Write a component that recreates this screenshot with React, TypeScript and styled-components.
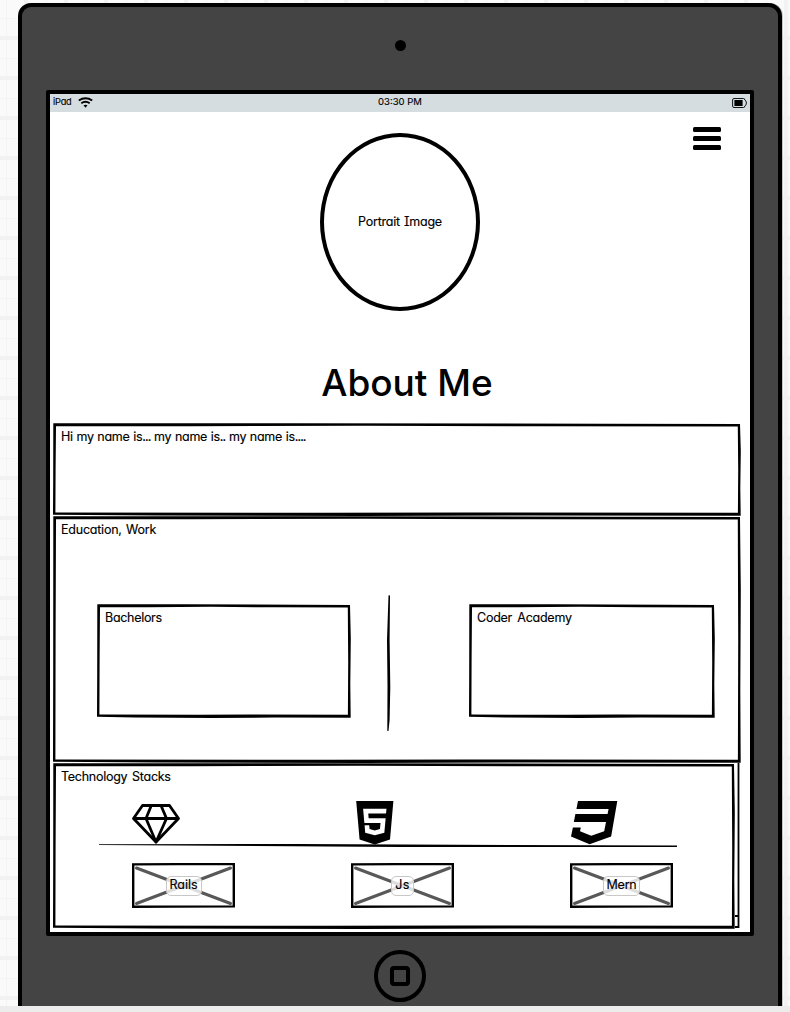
import React from "react";
import styled, { createGlobalStyle } from "styled-components";
import { FaHtml5, FaCss3 } from "react-icons/fa";

const GlobalStyle = createGlobalStyle`
  *, *::after { box-sizing: border-box; }
  html, body { margin: 0; padding: 0; }
  body {
    width: 790px;
    height: 1012px;
    overflow: hidden;
    color: #000;
    font-family: Inter, "Liberation Sans", sans-serif;
    font-feature-settings: "cv11" 1, "cv08" 1;
  }
  svg { display: block; }
`;

const Canvas = styled.div`
  height: 1012px;
  padding: 3px 8px 0 18px;
  border-bottom: 6px solid #ececec;
  overflow: hidden;
  background-color: #fafafa;
  background-image:
    linear-gradient(90deg, #f2f2f2 4px, transparent 4px),
    linear-gradient(#f2f2f2 4px, transparent 4px),
    linear-gradient(90deg, #f4f4f4 1px, transparent 1px),
    linear-gradient(#f4f4f4 1px, transparent 1px);
  background-size: 40px 40px;
  background-position: 24px 0, 0 36px, 6px 0, 0 18px;
`;

const Device = styled.div`
  display: flex;
  flex-direction: column;
  align-items: center;
  width: 764px;
  height: 1003px;
  background: #444;
  border: 4px solid #000;
  border-bottom: 0;
  border-radius: 13px 13px 0 0;
  box-shadow: 1px 0 0 #c4c4c4;
`;

const Camera = styled.div`
  width: 11px;
  height: 11px;
  margin: 32.5px 0 39.5px;
  border-radius: 50%;
  background: #000;
`;

const Screen = styled.main`
  display: flex;
  flex-direction: column;
  width: 708px;
  height: 846px;
  flex: none;
  background: #fff;
  border: 4px solid #000;
  border-radius: 2px;
`;

const HomeButton = styled.div`
  display: grid;
  place-items: center;
  width: 52px;
  height: 52px;
  flex: none;
  margin-top: 14px;
  border: 4px solid #000;
  border-radius: 50%;
  &::after {
    content: "";
    width: 20px;
    height: 20px;
    border: 4px solid #000;
    border-radius: 4px;
  }
`;

const StatusBar = styled.div`
  display: grid;
  grid-template-columns: 1fr auto 1fr;
  align-items: center;
  height: 18px;
  flex: none;
  padding: 0 3px 2px;
  background: #d6dde0;
  line-height: 15px;
`;

const StatusLeft = styled.div`
  display: flex;
  align-items: center;
  gap: 6px;
`;

const StatusRight = styled.div`
  display: flex;
  justify-content: flex-end;
`;

const Text = styled.span<{ $size?: number; $track?: number; $gap?: number }>`
  font-size: ${(p) => p.$size ?? 12.5}px;
  letter-spacing: ${(p) => p.$track ?? 0}px;
  word-spacing: ${(p) => p.$gap ?? 0}px;
  white-space: nowrap;
  -webkit-text-stroke: 0.15px #000;
`;

const StatusText = styled(Text)`
  padding-bottom: 2px;
`;

const Dots = styled.span`
  letter-spacing: -0.9px;
`;

const Hero = styled.header`
  display: grid;
  grid-template-columns: 1fr 160px 1fr;
  height: 199px;
  flex: none;
  padding: 14px 29px 0;
`;

const Portrait = styled.div`
  display: grid;
  grid-column: 2;
  place-items: center;
  width: 160px;
  height: 178px;
  margin-top: 7px;
  padding-bottom: 2px;
  border: 4px solid #000;
  border-radius: 50%;
`;

const MenuButton = styled.div`
  display: flex;
  flex-direction: column;
  justify-self: end;
  gap: 4px;
  width: 28px;
  margin-top: 1px;
`;

const MenuBar = styled.i`
  height: 5px;
  border-radius: 1.5px;
  background: #000;
`;

const Title = styled.h1`
  height: 112px;
  flex: none;
  margin: 0;
  padding: 49px 0 0 14px;
  text-align: center;
  font-size: 37px;
  font-weight: 500;
  line-height: 46px;
`;

const Panel = styled.section<{ $w: number; $h: number }>`
  position: relative;
  display: flex;
  flex-direction: column;
  flex: none;
  width: ${(p) => p.$w}px;
  height: ${(p) => p.$h}px;
  padding: 5px 8px;
  line-height: 18px;
`;

const Outline = styled.svg`
  position: absolute;
  inset: 0;
  overflow: visible;
  pointer-events: none;
`;

const Panels = styled.div`
  display: flex;
  flex-direction: column;
  padding-left: 3px;
`;

const CardRow = styled.div`
  display: flex;
  margin: 56px 0 0 36px;
`;

const CardSlot = styled.div`
  padding-top: 9px;
`;

const Divider = styled.svg`
  margin: 0 77px 0 35px;
`;

const IconRow = styled.div`
  display: grid;
  grid-template-columns: 219px 219px 103px;
  align-items: start;
  height: 46px;
  flex: none;
  margin: 12px 0 0 71px;
`;

const IconSlot = styled.div<{ $x: number; $y?: number; $w: number }>`
  margin: ${(p) => p.$y ?? 0}px 0 0 ${(p) => p.$x}px;
  svg {
    width: ${(p) => p.$w}px;
    height: auto;
  }
`;

const Rule = styled.svg`
  flex: none;
  margin-left: 38px;
`;

const ImageRow = styled.div`
  display: flex;
  gap: 116px;
  margin: 15px 0 0 71px;
`;

const ImageBox = styled.div`
  position: relative;
  display: grid;
  place-items: center;
  width: 103px;
  height: 45px;
`;

const Caption = styled.div<{ $w: number }>`
  position: relative;
  display: flex;
  justify-content: center;
  width: ${(p) => p.$w}px;
  height: 20px;
  line-height: 15px;
  border: 1px solid #c8c8c8;
  border-radius: 5px;
  background: rgba(255, 255, 255, 0.8);
`;

/* Pen-drawn rectangle: strokes lean and swell slightly along each side. */
function SketchFrame({ w, h }: { w: number; h: number }) {
  return (
    <Outline width={w} height={h}>
      <path
        d={`M0.3 0.3 L${w * 0.35} 0.2 L${w * 0.8} 0.7 L${w - 1} 1.1 L${w - 0.2} ${h * 0.3} L${w - 0.7} ${h * 0.7} L${w - 0.3} ${h - 0.3} L${w * 0.7} ${h - 0.5} L${w * 0.45} ${h} L${w * 0.15} ${h - 0.4} L0 ${h - 1.2} L0.2 ${h * 0.6} Z
        M3 3.3 L2.6 ${h * 0.5} L2.4 ${h - 3.4} L${w * 0.4} ${h - 3.2} L${w * 0.6} ${h - 3.4} L${w - 3.1} ${h - 3.3} L${w - 2.8} ${h * 0.5} L${w - 3.2} 3.4 L${w * 0.7} 3.3 L${w * 0.45} 2.8 L${w * 0.2} 3.2 Z`}
        fillRule="evenodd"
      />
    </Outline>
  );
}

function Card({ w, label, track, gap }: { w: number; label: string; track: number; gap?: number }) {
  return (
    <CardSlot>
      <Panel as="div" $w={w} $h={114}>
        <SketchFrame w={w} h={114} />
        <Text $track={track} $gap={gap}>{label}</Text>
      </Panel>
    </CardSlot>
  );
}

function ImagePlaceholder({ label, w, track }: { label: string; w: number; track?: number }) {
  return (
    <ImageBox>
      <Outline width="103" height="45">
        <path d="M4.5 5 98.5 40.5M98.5 5 4.5 40.5" stroke="#585858" strokeWidth="3" strokeLinecap="round" />
        <path d="M0 .3 45 0H103V44.5L40 44.7 0 45ZM2.4 2.6V42.4H100.6V2.2L45 2.3Z" fillRule="evenodd" />
      </Outline>
      <Caption $w={w}>
        <Text $size={12.5} $track={track}>{label}</Text>
      </Caption>
    </ImageBox>
  );
}

export default function App() {
  return (
    <>
      <GlobalStyle />
      <Canvas>
        <Device>
          <Camera />
          <Screen>
            <StatusBar>
              <StatusLeft>
                <StatusText $size={9.2} $track={-0.2}>iPad</StatusText>
                <svg width="15" height="11" viewBox="0 0 15 11" fill="none" stroke="#000">
                  <path d="M.8 3.5Q7.5-1 14.2 3.5" strokeWidth="2" />
                  <path d="M3.3 6.3Q7.5 3.2 11.7 6.3" strokeWidth="1.8" />
                  <path d="M5.5 8.3Q7.5 7 9.5 8.3L7.5 10.8Z" fill="#000" stroke="none" />
                </svg>
              </StatusLeft>
              <StatusText $size={9.5}>03:30 PM</StatusText>
              <StatusRight>
                <svg width="15" height="10" viewBox="0 0 15 10">
                  <path d="M2 .5H11.5Q12.8.5 12.8 2 14.4 2.7 14.4 5T12.8 8Q12.8 9.5 11.5 9.5H2Q.6 9.5.6 8V2Q.6.5 2 .5Z" fill="none" stroke="#111" />
                  <rect x="2.4" y="2" width="8.2" height="6" />
                </svg>
              </StatusRight>
            </StatusBar>
            <Hero>
              <Portrait>
                <Text $track={-0.25} $gap={1}>Portrait Image</Text>
              </Portrait>
              <MenuButton>
                <MenuBar />
                <MenuBar />
                <MenuBar />
              </MenuButton>
            </Hero>
            <Title>About Me</Title>
            <Panels>
              <Panel $w={688} $h={93}>
                <SketchFrame w={688} h={93} />
                <Text $track={-0.27} $gap={0.4}>
                  Hi my name is<Dots>...</Dots> my name is<Dots>..</Dots> my name is<Dots>....</Dots>
                </Text>
              </Panel>
              <Panel $w={688} $h={247}>
                <SketchFrame w={688} h={247} />
                <Text $track={-0.22} $gap={1}>Education, Work</Text>
                <CardRow>
                  <Card w={254} label="Bachelors" track={-0.3} />
                  <Divider width="6" height="136">
                    <path d="M2.5.5Q4 0 4 1L3.6 45 4.3 92 3.6 125 2.5 136H1.3L1.5 90 1 45Z" />
                  </Divider>
                  <Card w={246} label="Coder Academy" track={-0.25} gap={2} />
                </CardRow>
              </Panel>
              <Panel $w={682} $h={166}>
                <Outline width="688" height="166">
                  <path d="M685.5 0V164H682M685.5 153H682" fill="none" stroke="#000" strokeWidth="1.8" />
                </Outline>
                <SketchFrame w={682} h={166} />
                <Text $track={-0.27} $gap={1.5}>Technology Stacks</Text>
                <IconRow>
                  <IconSlot $x={0} $y={6} $w={48}>
                    <svg viewBox="0 0 48 40" fill="none" stroke="#000" strokeWidth="2.8" strokeLinejoin="round">
                      <path d="M10.5 1.5H37.5L46.5 14.5 24 38 1.5 14.5Z" />
                      <path d="M1.5 14.5H46.5M19.3 1.5 14 14.5 24 38 34.5 14.5 29 1.5" />
                    </svg>
                  </IconSlot>
                  <IconSlot $x={-1.3} $w={49.6}>
                    <FaHtml5 />
                  </IconSlot>
                  <IconSlot $x={1} $w={49.4}>
                    <FaCss3 />
                  </IconSlot>
                </IconRow>
                <Rule width="578" height="4">
                  <path d="M0 .2 200 0 578 1.6V3L300 3 0 1.1Z" />
                </Rule>
                <ImageRow>
                  <ImagePlaceholder label="Rails" w={36} />
                  <ImagePlaceholder label="Js" w={23} track={0.3} />
                  <ImagePlaceholder label="Mern" w={37} track={-0.2} />
                </ImageRow>
              </Panel>
            </Panels>
          </Screen>
          <HomeButton />
        </Device>
      </Canvas>
    </>
  );
}
